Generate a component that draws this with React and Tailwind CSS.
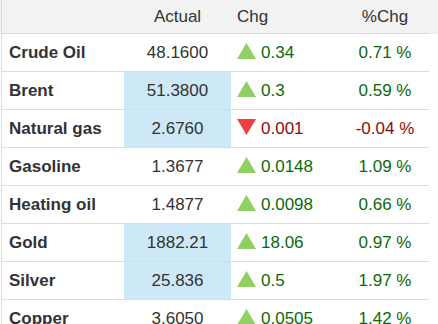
const rows = [
  { name: "Crude Oil", actual: "48.1600", chg: "0.34", pct: "0.71 %", up: true, hl: false },
  { name: "Brent", actual: "51.3800", chg: "0.3", pct: "0.59 %", up: true, hl: true },
  { name: "Natural gas", actual: "2.6760", chg: "0.001", pct: "-0.04 %", up: false, hl: true },
  { name: "Gasoline", actual: "1.3677", chg: "0.0148", pct: "1.09 %", up: true, hl: false },
  { name: "Heating oil", actual: "1.4877", chg: "0.0098", pct: "0.66 %", up: true, hl: false },
  { name: "Gold", actual: "1882.21", chg: "18.06", pct: "0.97 %", up: true, hl: true },
  { name: "Silver", actual: "25.836", chg: "0.5", pct: "1.97 %", up: true, hl: true },
  { name: "Copper", actual: "3.6050", chg: "0.0505", pct: "1.42 %", up: true, hl: false },
]

const Arrow = ({ up }) =>
  up ? (
    <svg width="19" height="16" viewBox="0 0 19 16" className="shrink-0">
      <polygon points="9.5,0 19,16 0,16" fill="#8fd062" />
    </svg>
  ) : (
    <svg width="19" height="16" viewBox="0 0 19 16" className="shrink-0">
      <polygon points="0,0 19,0 9.5,16" fill="#ea4140" />
    </svg>
  )

const cols = "grid grid-cols-[122px_107px_110px_88px]"

export default function App() {
  return (
    <div
      className="w-[438px] h-[324px] overflow-hidden bg-white text-[17px] text-[#333]"
      style={{ fontFamily: '"Liberation Sans", Arial, sans-serif' }}
    >
      <div className="bg-[#f2f2f2]">
        <div className={`${cols} ml-px h-[34px] items-center border-l border-b border-[#dcdcdc] w-[428px]`}>
          <div />
          <div className="text-center">Actual</div>
          <div className="pl-[6px]">Chg</div>
          <div className="text-center">%Chg</div>
        </div>
      </div>
      {rows.map((r) => (
        <div key={r.name} className={`${cols} ml-px h-[38px] border-l border-b border-[#dcdcdc] w-[428px]`}>
          <div className="flex items-center pl-[7px] font-bold">{r.name}</div>
          <div className={`flex items-center justify-center ${r.hl ? "bg-[#cde8f6]" : ""}`}>{r.actual}</div>
          <div className={`flex items-center gap-[5px] pl-[6px] ${r.up ? "text-[#0a6a0a]" : "text-[#8f0a0a]"}`}>
            <span className="mb-[3px]"><Arrow up={r.up} /></span>
            <span>{r.chg}</span>
          </div>
          <div className={`flex items-center justify-center ${r.up ? "text-[#0a6a0a]" : "text-[#8f0a0a]"}`}>{r.pct}</div>
        </div>
      ))}
    </div>
  )
}
